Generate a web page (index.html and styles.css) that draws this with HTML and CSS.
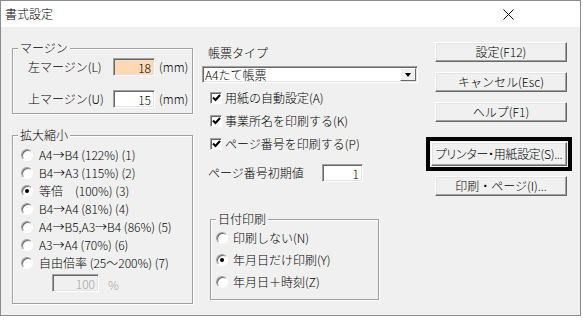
FILE: index.html
```html
<!DOCTYPE html>
<html lang="ja">
<head>
  <meta charset="UTF-8">
  <title>書式設定</title>
  <link rel="stylesheet" href="styles.css">
</head>
<body>
<div class="window">
  <div class="titlebar">
    <span class="title">書式設定</span>
    <svg class="close" width="11" height="11" viewBox="0 0 11 11">
      <path d="M0.5 0.5 L10.5 10.5 M10.5 0.5 L0.5 10.5" stroke="#000" stroke-width="1" fill="none"/>
    </svg>
  </div>

  <div class="client">
    <div class="col-left">
      <fieldset class="group margins">
        <legend>マージン</legend>
        <div class="field-row">
          <span class="field-label">左マージン(L)</span>
          <input class="num active" type="text" value="18">
          <span class="unit">(mm)</span>
        </div>
        <div class="field-row">
          <span class="field-label">上マージン(U)</span>
          <input class="num" type="text" value="15">
          <span class="unit">(mm)</span>
        </div>
      </fieldset>

      <fieldset class="group scale">
        <legend>拡大縮小</legend>
        <div class="radio-row"><span class="radio"></span>A4→B4 (122%) (1)</div>
        <div class="radio-row"><span class="radio"></span>B4→A3 (115%) (2)</div>
        <div class="radio-row"><span class="radio checked"></span>等倍　(100%) (3)</div>
        <div class="radio-row"><span class="radio"></span>B4→A4 (81%) (4)</div>
        <div class="radio-row"><span class="radio"></span>A4→B5,A3→B4 (86%) (5)</div>
        <div class="radio-row"><span class="radio"></span>A3→A4 (70%) (6)</div>
        <div class="radio-row"><span class="radio"></span>自由倍率 (25～200%) (7)</div>
        <div class="free-row">
          <input class="num disabled" type="text" value="100" disabled>
          <span class="percent">%</span>
        </div>
      </fieldset>
    </div>

    <div class="col-mid">
      <div class="type-label">帳票タイプ</div>
      <div class="combo">
        <span class="combo-text">A4たて帳票</span>
        <span class="combo-btn"><span class="arrow"></span></span>
      </div>

      <div class="check-row"><span class="check"><svg width="9" height="8" viewBox="0 0 9 8"><path d="M1 3.5 L3.5 6 L8 1" stroke="#000" stroke-width="2" fill="none"/></svg></span>用紙の自動設定(A)</div>
      <div class="check-row"><span class="check"><svg width="9" height="8" viewBox="0 0 9 8"><path d="M1 3.5 L3.5 6 L8 1" stroke="#000" stroke-width="2" fill="none"/></svg></span>事業所名を印刷する(K)</div>
      <div class="check-row"><span class="check"><svg width="9" height="8" viewBox="0 0 9 8"><path d="M1 3.5 L3.5 6 L8 1" stroke="#000" stroke-width="2" fill="none"/></svg></span>ページ番号を印刷する(P)</div>

      <div class="page-row">
        <span class="page-label">ページ番号初期値</span>
        <input class="num page" type="text" value="1">
      </div>

      <fieldset class="group date">
        <legend>日付印刷</legend>
        <div class="radio-row"><span class="radio"></span>印刷しない(N)</div>
        <div class="radio-row"><span class="radio checked"></span>年月日だけ印刷(Y)</div>
        <div class="radio-row"><span class="radio"></span>年月日＋時刻(Z)</div>
      </fieldset>
    </div>

    <div class="col-right">
      <button class="btn">設定(F12)</button>
      <button class="btn">キャンセル(Esc)</button>
      <button class="btn">ヘルプ(F1)</button>
      <div class="focus-frame">
        <button class="btn wide">プリンター・用紙設定(S)...</button>
      </div>
      <button class="btn last">印刷・ページ(I)...</button>
    </div>
  </div>
</div>
</body>
</html>
```

FILE: styles.css
```css
* {
  box-sizing: border-box;
}

body {
  margin: 0;
  background: #fff;
  font-family: "Noto Sans CJK JP", "Noto Sans", sans-serif;
  font-size: 12px;
  font-weight: 300;
  line-height: 14px;
  color: #000;
}

.window {
  width: 581px;
  height: 316px;
  border: 1px solid #8c8c8c;
  background: #f0f0f0;
  display: flex;
  flex-direction: column;
}

.titlebar {
  height: 26px;
  background: #fff;
  display: flex;
  align-items: center;
  justify-content: space-between;
  padding: 0 66px 0 4px;
}

.client {
  flex: 1;
  display: flex;
  padding-left: 11px;
}

/* group boxes */
.group {
  margin: 0;
  padding: 0;
  min-width: 0;
  border: 1px solid #a0a0a0;
  box-shadow: inset 1px 1px 0 #fff, 1px 1px 0 #fff;
}

.group legend {
  margin-left: 5px;
  padding: 0 2px;
  line-height: 14px;
  background: #f0f0f0;
}

/* sunken edit boxes */
.num {
  height: 18px;
  margin: 0;
  padding: 0 3px 0 2px;
  font: inherit;
  text-align: right;
  color: #000;
  background: #fff;
  border: 1px solid;
  border-color: #a0a0a0 #fff #fff #a0a0a0;
  box-shadow: inset 1px 1px 0 #696969, inset -1px -1px 0 #e3e3e3;
  outline: none;
}

.num.active {
  background: #fcd9b2;
}

.num.disabled {
  width: 47px;
  background: #f0f0f0;
  color: #a0a0a0;
}

/* left column */
.col-left {
  width: 181px;
}

.margins {
  margin-top: 14px;
  padding-bottom: 5px;
}

.field-row {
  display: flex;
  align-items: center;
  height: 18px;
  margin: 3px 0 0 15px;
}

.field-row + .field-row {
  margin-top: 14px;
}

.field-label {
  width: 85px;
}

.field-row .num {
  width: 42px;
}

.unit {
  margin-left: 4px;
}

.scale {
  margin-top: 14px;
  padding: 4px 0 11px;
}

.radio-row {
  display: flex;
  align-items: center;
  height: 18px;
  padding-left: 8px;
  white-space: nowrap;
}

.radio {
  width: 12px;
  height: 12px;
  margin-right: 6px;
  border-radius: 50%;
  border: 1px solid;
  border-color: #a0a0a0 #fff #fff #a0a0a0;
  background: #fff;
  box-shadow: inset 1px 1px 0 #696969;
  display: flex;
  align-items: center;
  justify-content: center;
  flex: none;
}

.radio.checked::after {
  content: "";
  width: 4px;
  height: 4px;
  border-radius: 50%;
  background: #000;
}

.free-row {
  display: flex;
  align-items: center;
  margin: 2px 0 0 39px;
}

.percent {
  margin: 4px 0 0 9px;
  color: #a0a0a0;
}

/* middle column */
.col-mid {
  width: 216px;
  margin-left: 9px;
}

.type-label {
  margin-top: 19px;
  padding-left: 6px;
}

.combo {
  display: flex;
  height: 17px;
  margin-top: 6px;
  background: #fff;
  border: 1px solid;
  border-color: #a0a0a0 #fff #fff #a0a0a0;
  box-shadow: inset 1px 1px 0 #696969, inset -1px -1px 0 #e3e3e3;
}

.combo-text {
  flex: 1;
  padding: 1px 0 0 2px;
}

.combo-btn {
  width: 16px;
  margin: 1px 1px 1px 0;
  background: #f0f0f0;
  border: 1px solid;
  border-color: #fff #696969 #696969 #fff;
  display: flex;
  align-items: center;
  justify-content: center;
}

.arrow {
  width: 0;
  height: 0;
  border-left: 3.5px solid transparent;
  border-right: 3.5px solid transparent;
  border-top: 4px solid #000;
}

.check-row {
  display: flex;
  align-items: center;
  height: 16px;
  margin-top: 7px;
  padding-left: 8px;
}

.check-row:first-of-type {
  margin-top: 9px;
}

.check {
  width: 12px;
  height: 12px;
  margin-right: 3px;
  background: #fff;
  border: 1px solid;
  border-color: #a0a0a0 #fff #fff #a0a0a0;
  box-shadow: inset 1px 1px 0 #696969;
  display: flex;
  align-items: center;
  justify-content: center;
  flex: none;
}

.page-row {
  display: flex;
  align-items: center;
  height: 18px;
  margin-top: 12px;
  padding-left: 6px;
}

.page-label {
  width: 114px;
}

.num.page {
  width: 41px;
}

.date {
  width: 169px;
  margin: 30px 0 0 8px;
  padding: 3px 0 8px;
}

.date .radio-row {
  padding-left: 5px;
}

.date .radio-row + .radio-row {
  margin-top: 4px;
}

.date .radio {
  margin-right: 5px;
}

/* right column */
.col-right {
  margin-left: 8px;
  display: flex;
  flex-direction: column;
  align-items: flex-start;
}

.btn {
  width: 132px;
  height: 20px;
  margin: 10px 0 0 9px;
  padding: 0;
  font: inherit;
  color: #000;
  background: #f0f0f0;
  border: 1px solid;
  border-color: #fff #696969 #696969 #fff;
  box-shadow: inset -1px -1px 0 #a0a0a0, inset 1px 1px 0 #e3e3e3;
  white-space: nowrap;
}

.btn:first-child {
  margin-top: 15px;
}

.focus-frame {
  width: 146px;
  height: 34px;
  margin-top: 15px;
  border: 4px solid #000;
  padding: 1px;
}

.btn.wide {
  width: 136px;
  height: 24px;
  margin: 0;
  font-feature-settings: "palt";
  letter-spacing: -0.3px;
}

.btn.last {
  margin-top: 5px;
}
```
